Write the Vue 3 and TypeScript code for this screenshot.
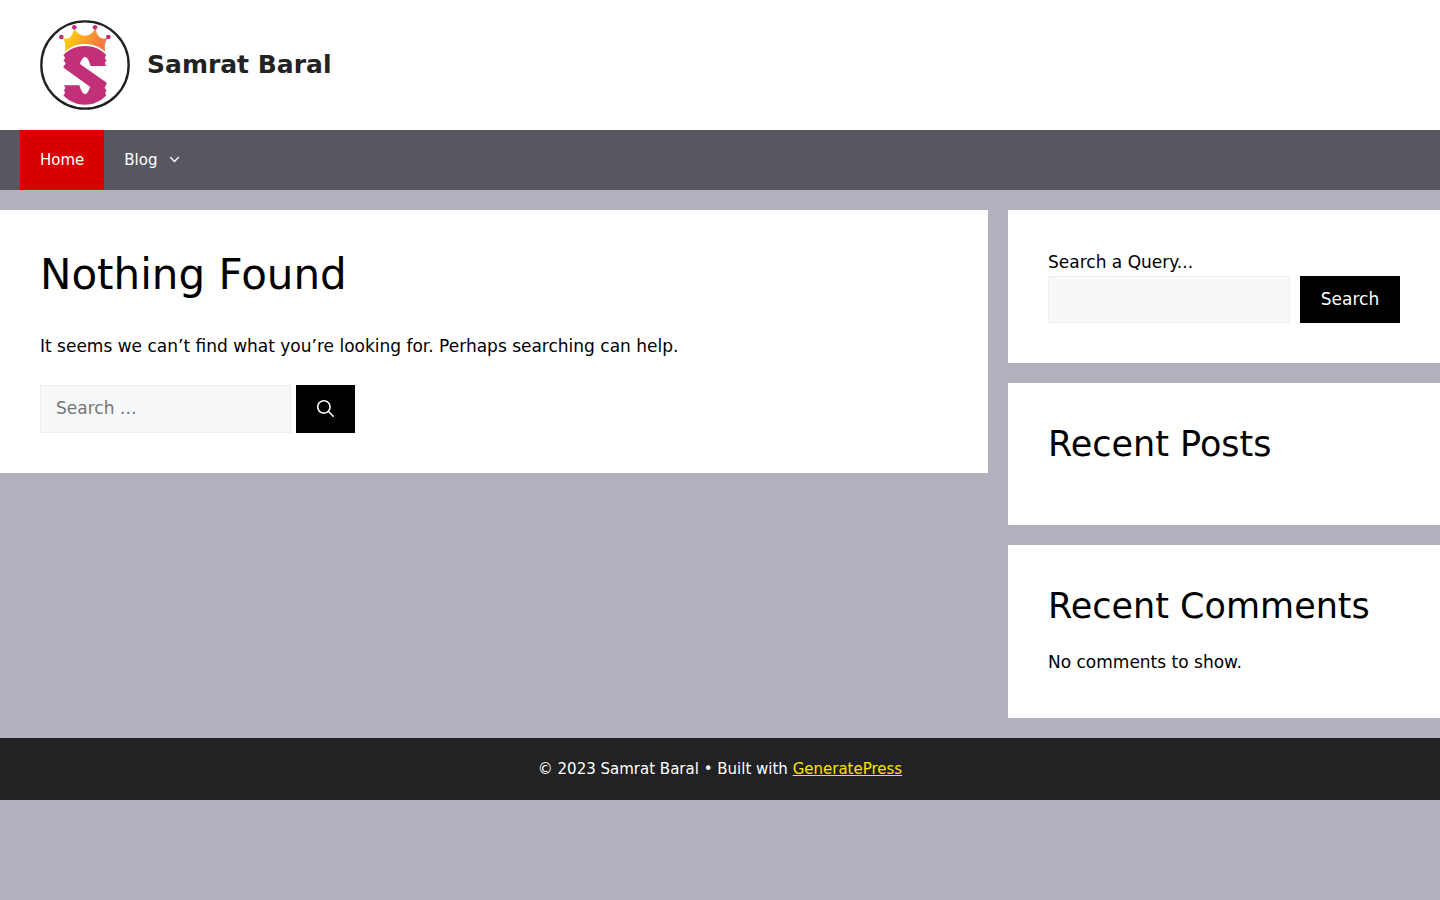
<script setup lang="ts">
import { ref } from 'vue'

interface NavItem {
  label: string
  current: boolean
  hasMenu: boolean
}

const siteName = 'Samrat Baral'
const navItems: NavItem[] = [
  { label: 'Home', current: true, hasMenu: false },
  { label: 'Blog', current: false, hasMenu: true },
]
const pageQuery = ref('')
const sidebarQuery = ref('')
</script>

<template>
  <div class="site">
    <header class="header">
      <a class="logo" href="#" :aria-label="siteName">
        <svg viewBox="15 15 270 270" aria-hidden="true">
          <defs>
            <linearGradient id="crown" x1="0" y1="0" x2="1" y2="0.25">
              <stop offset="0.1" stop-color="#ffd50a" />
              <stop offset="0.5" stop-color="#fbab25" />
              <stop offset="0.95" stop-color="#f3793f" />
            </linearGradient>
          </defs>
          <circle cx="150" cy="150" r="131" fill="#fff" stroke="#222021" stroke-width="7" />
          <path
            fill="url(#crown)"
            d="M89 111C93 96 91 83 84 69C100 77 113 65 118 40C124 54 136 62 149 62C163 62 175 54 181 40C186 65 199 77 217 69C209 83 207 97 211 111C178 79 122 79 89 111Z"
          />
          <g fill="#c13078">
            <circle cx="79" cy="66" r="7" />
            <circle cx="118" cy="37" r="7" />
            <circle cx="180" cy="37" r="7" />
            <circle cx="220" cy="66" r="7" />
            <path
              d="M85 121C117 84 183 84 214 121C208 128 209 132 215 137C209 141 207 145 215 153L167 153C163 142 159 126 150 126C142 127 139 138 134 146L213 202C216 205 215 209 212 212C207 217 209 221 215 226C211 231 209 235 214 241C180 279 120 279 85 241C92 234 91 231 86 226C93 221 92 217 86 211L133 211C137 224 142 236 151 238C160 234 161 224 166 216L88 160C84 156 84 153 90 149C94 145 91 141 85 137C91 132 92 128 85 121Z"
            />
          </g>
        </svg>
      </a>
      <a class="title" href="#">{{ siteName }}</a>
    </header>

    <nav class="nav" aria-label="Primary">
      <a
        v-for="item in navItems"
        :key="item.label"
        class="nav-link"
        :class="{ current: item.current }"
        href="#"
        :aria-current="item.current ? 'page' : undefined"
      >
        {{ item.label }}
        <svg v-if="item.hasMenu" class="chevron" viewBox="0 0 330 512" aria-hidden="true">
          <path
            d="M305.913 197.085c0 2.266-1.133 4.815-2.833 6.514L171.087 335.593c-1.7 1.7-4.249 2.832-6.515 2.832s-4.815-1.133-6.515-2.832L26.064 203.599c-1.7-1.7-2.832-4.248-2.832-6.514s1.132-4.816 2.832-6.515l14.162-14.163c1.7-1.699 3.966-2.832 6.515-2.832 2.266 0 4.815 1.133 6.515 2.832l111.316 111.317 111.316-111.317c1.7-1.699 4.249-2.832 6.515-2.832s4.815 1.133 6.515 2.832l14.162 14.163c1.7 1.7 2.833 4.249 2.833 6.515z"
          />
        </svg>
      </a>
    </nav>

    <div class="content">
      <main class="card main">
        <h1>Nothing Found</h1>
        <p class="message">It seems we can’t find what you’re looking for. Perhaps searching can help.</p>
        <form class="page-search" role="search" @submit.prevent>
          <input v-model="pageQuery" type="search" placeholder="Search …" aria-label="Search for:" />
          <button type="submit" aria-label="Search">
            <svg class="magnifier" viewBox="0 0 512 512" aria-hidden="true">
              <path
                fill-rule="evenodd"
                clip-rule="evenodd"
                d="M208 48c-88.366 0-160 71.634-160 160s71.634 160 160 160 160-71.634 160-160S296.366 48 208 48zM0 208C0 93.125 93.125 0 208 0s208 93.125 208 208c0 48.741-16.765 93.566-44.843 129.024l133.826 134.018c9.366 9.379 9.355 24.575-.025 33.941-9.379 9.366-24.575 9.355-33.941-.025L337.238 370.987C301.747 399.167 256.839 416 208 416 93.125 416 0 322.875 0 208z"
              />
            </svg>
          </button>
        </form>
      </main>

      <aside class="sidebar">
        <section class="card">
          <form role="search" @submit.prevent>
            <label class="query-label" for="sidebar-search">Search a Query...</label>
            <div class="query-row">
              <input id="sidebar-search" v-model="sidebarQuery" type="search" />
              <button type="submit">Search</button>
            </div>
          </form>
        </section>
        <section class="card">
          <h2>Recent Posts</h2>
        </section>
        <section class="card">
          <h2>Recent Comments</h2>
          <p class="comments">No comments to show.</p>
        </section>
      </aside>
    </div>

    <footer class="footer">
      © 2023 Samrat Baral • Built with <a href="#">GeneratePress</a>
    </footer>
  </div>
</template>

<style>
body {
  margin: 0;
  background: #b2b2be;
}
</style>

<style scoped>
.site {
  font: 17px/25px "DejaVu Sans", sans-serif;
  color: #000;
}

.site *,
.site {
  box-sizing: border-box;
}

.header {
  display: flex;
  align-items: center;
  gap: 17px;
  padding: 20px 40px;
  background: #fff;
}

.logo,
.logo svg {
  display: block;
  width: 90px;
  height: 90px;
}

.title {
  font-size: 25px;
  line-height: 30px;
  font-weight: 700;
  color: #222;
  text-decoration: none;
}

.nav {
  display: flex;
  padding: 0 20px;
  background: #575760;
}

.nav-link {
  display: flex;
  align-items: center;
  gap: 12px;
  padding: 0 20px;
  font-size: 15px;
  line-height: 60px;
  color: #fff;
  text-decoration: none;
}

.nav-link.current {
  background: #d90000;
}

.chevron {
  width: 11px;
  height: 18px;
  padding-bottom: 1px;
  fill: currentColor;
}

.content {
  display: grid;
  grid-template-columns: minmax(0, 1fr) 30%;
  column-gap: 20px;
  align-items: start;
  padding: 20px 0;
}

.card {
  padding: 40px;
  background: #fff;
}

h1,
h2,
p {
  margin: 0;
  font-weight: 400;
}

h1 {
  margin-bottom: 34px;
  font-size: 42px;
  line-height: 50px;
}

h2 {
  margin-bottom: 20px;
  font-size: 35px;
  line-height: 42px;
}

.message {
  margin-bottom: 26px;
}

.sidebar {
  display: grid;
  grid-template-columns: minmax(0, 1fr);
  gap: 20px;
}

.page-search,
.query-row {
  display: flex;
}

.page-search {
  gap: 5px;
  height: 48px;
}

.query-row {
  gap: 10px;
  height: 47px;
}

.query-label {
  display: block;
  margin-bottom: 1px;
}

input {
  min-width: 0;
  padding: 0 15px 2px;
  border: 1px solid #eee;
  border-radius: 0;
  background: #f7f8fa;
  color: #000;
  font: inherit;
  appearance: none;
}

input::placeholder {
  color: #757575;
}

.page-search input {
  width: 251px;
}

.query-row input {
  flex: 1;
}

button {
  display: flex;
  align-items: center;
  justify-content: center;
  padding: 0 20px 1px;
  border: 0;
  background: #000;
  color: #fff;
  font: inherit;
  cursor: pointer;
}

.page-search button {
  width: 59px;
}

.query-row button {
  width: 100px;
}

.magnifier {
  width: 17px;
  height: 17px;
  flex: none;
  fill: currentColor;
}

.comments {
  line-height: 31px;
}

.footer {
  padding: 20px 40px;
  background: #222;
  color: #fff;
  font-size: 15px;
  line-height: 22px;
  text-align: center;
}

.footer a {
  color: #ffe100;
}
</style>
